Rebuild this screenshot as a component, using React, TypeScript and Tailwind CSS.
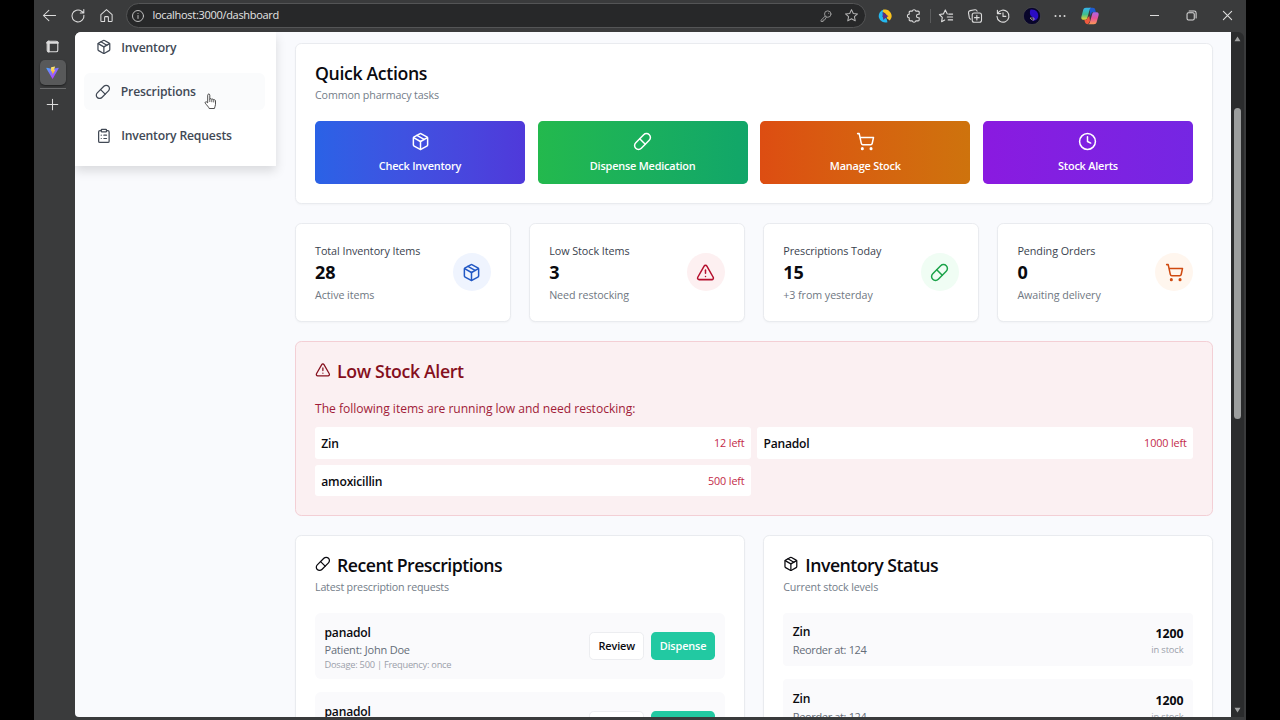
import type { ReactNode } from "react";
import { Clock, ClipboardList, Package, Pill, ShoppingCart, TriangleAlert } from "lucide-react";

const NAV = [
  { label: "Inventory", icon: Package, active: false },
  { label: "Prescriptions", icon: Pill, active: true },
  { label: "Inventory Requests", icon: ClipboardList, active: false },
];

const ACTIONS = [
  { label: "Check Inventory", icon: Package, bg: "from-[#2a62e6] to-[#4f39da]" },
  { label: "Dispense Medication", icon: Pill, bg: "from-[#23b94d] to-[#11a669]" },
  { label: "Manage Stock", icon: ShoppingCart, bg: "from-[#dd4d12] to-[#ce730d]" },
  { label: "Stock Alerts", icon: Clock, bg: "from-[#8a1ae0] to-[#7526e3]" },
];

const STATS = [
  { label: "Total Inventory Items", value: "28", note: "Active items", icon: Package, tone: "bg-[#eff4fe] text-[#2258c4]" },
  { label: "Low Stock Items", value: "3", note: "Need restocking", icon: TriangleAlert, tone: "bg-[#fdf0f1] text-[#b5102e]" },
  { label: "Prescriptions Today", value: "15", note: "+3 from yesterday", icon: Pill, tone: "bg-[#f0fdf4] text-[#1ca34a]" },
  { label: "Pending Orders", value: "0", note: "Awaiting delivery", icon: ShoppingCart, tone: "bg-[#fff6ee] text-[#cf4a10]" },
];

const LOW_STOCK = [
  { name: "Zin", left: "12 left" },
  { name: "Panadol", left: "1000 left" },
  { name: "amoxicillin", left: "500 left" },
];

function Stroke({ children, size = 16, className = "" }: { children: ReactNode; size?: number; className?: string }) {
  return (
    <svg
      width={size}
      height={size}
      viewBox="0 0 16 16"
      fill="none"
      stroke="currentColor"
      strokeWidth={1.1}
      strokeLinecap="round"
      strokeLinejoin="round"
      className={className}
    >
      {children}
    </svg>
  );
}

function Slot({ children }: { children: ReactNode }) {
  return <div className="flex h-8 w-[28.5px] shrink-0 items-center justify-center">{children}</div>;
}

function Toolbar() {
  return (
    <header className="flex h-[31px] shrink-0 items-center text-[#dcdcdc]">
      <div className="flex pl-[1.5px]">
        <Slot>
          <Stroke size={15}><path d="M14.5 8H1.8M7.3 2.5 1.5 8l5.8 5.5" /></Stroke>
        </Slot>
        <Slot>
          <Stroke><path d="M13.9 7.2A6 6 0 1 1 11.6 3.2L13.8 5M13.8 1.5V5h-3.5" /></Stroke>
        </Slot>
        <Slot>
          <Stroke size={15}><path d="M2 7 8 1.7 14 7v6.7a.8.8 0 0 1-.8.8H10V10a.8.8 0 0 0-.8-.8H6.8A.8.8 0 0 0 6 10v4.5H2.800a.8.8 0 0 1-.8-.8z" /></Stroke>
        </Slot>
      </div>
      <div className="ml-[4.5px] flex h-[25px] w-[740px] items-center rounded-full border border-[#545556] bg-[#272829] pr-[6px] pl-[4px]">
        <Stroke size={14} className="text-[#c4c4c4]">
          <circle cx="8" cy="8" r="6.3" />
          <path d="M8 7.4v3.4M8 5.1v.1" />
        </Stroke>
        <span className="ml-[8px] flex-1 text-[11px] tracking-[-0.3px] text-[#e4e4e4]">localhost:3000/dashboard</span>
        <Stroke size={14} className="text-[#9b9b9b]">
          <circle cx="10" cy="5.8" r="3.7" />
          <path d="M7.1 8.1 2.4 12.8v1.5h2.3v-1.6h1.6l2.2-3.4M11 4.8v.1" />
        </Stroke>
        <Stroke size={15} className="ml-[11px] text-[#b4b4b4]">
          <path d="m8 1.7 1.9 4.1 4.5.5-3.3 3 .9 4.4-4-2.2-4 2.2.9-4.4-3.3-3 4.5-.5z" />
        </Stroke>
      </div>
      <div className="flex items-center pl-[5.5px]">
        <Slot>
          <svg width="14" height="14" viewBox="0 0 14 14">
            <path d="M6 .5A6.600 6.600 0 1 0 9.500 13.200L8.500 9.500 4.500 8z" fill="#25b7ee" />
            <path d="M5.500.6a6.600 6.600 0 0 1 6.300 10.900L9 9.500 8 5 4.600 2.500z" fill="#fbc31d" />
            <path d="M4.400 3 10.500 7.300 8.200 8.300 5.300 11z" fill="#5a2f86" />
          </svg>
        </Slot>
        <Slot>
          <Stroke>
            <path d="M4.300 3.100h2a1.800 1.800 0 0 1 3.500 0h2.300a1.100 1.100 0 0 1 1.100 1.100v2h-.9a1.800 1.800 0 0 0 0 3.600h.9v2a1.100 1.100 0 0 1-1.100 1.100H9.800a1.800 1.800 0 0 1-3.500 0h-2a1.100 1.100 0 0 1-1.100-1.100v-2a1.800 1.800 0 0 1 0-3.600v-2a1.100 1.100 0 0 1 1.100-1.100z" />
          </Stroke>
        </Slot>
        <div className="mx-[1.5px] h-3.5 w-px bg-[#5a5b5c]" />
        <Slot>
          <Stroke><path d="M9.3 5.9 7.3 1.9 5.4 5.9l-4 .6L4.3 9.4l-.7 4.3 3.1-1.7M10.7 6.1h3.9M9.3 9h5.3M10.2 11.9h4.4" /></Stroke>
        </Slot>
        <Slot>
          <Stroke>
            <path d="M3.7 11.2a2 2 0 0 1-1.4-1.5L1.5 4.8a2 2 0 0 1 1.6-2.2l4.8-.8a2 2 0 0 1 2.2 1.4" />
            <rect x="5.2" y="5" width="9.3" height="9.3" rx="2" />
            <path d="M9.85 7.3v4.7M7.5 9.65h4.7" />
          </Stroke>
        </Slot>
        <Slot>
          <Stroke><path d="M2.4 2.2v3.4h3.4M2.6 5.5A6 6 0 1 1 2 8.4M8 4.8v3.6h2.8" /></Stroke>
        </Slot>
        <Slot>
          <svg width="18" height="18" viewBox="0 0 18 18">
            <circle cx="9" cy="9" r="8.6" fill="#08052a" stroke="#555" strokeWidth=".5" />
            <path d="M7.500 2.500c5-.8 8 2.500 7.800 6.500-.3 3.500-3.300 5-6 4.800 1.500-1 1.500-2.300.2-3.500C6.500 8.500 6.500 5 7.500 2.500z" fill="#2a0cc4" />
            <path d="M7 11h4v2H9z" fill="none" stroke="#c7b6a4" strokeWidth=".7" />
          </svg>
        </Slot>
        <Slot>
          <svg width="12" height="4" viewBox="0 0 12 4" fill="currentColor">
            <circle cx="1.5" cy="2" r="1" />
            <circle cx="6" cy="2" r="1" />
            <circle cx="10.5" cy="2" r="1" />
          </svg>
        </Slot>
        <div className="ml-[1.5px]">
          <Slot><Copilot /></Slot>
        </div>
      </div>
      <div className="ml-auto flex">
        <div className="flex w-[36.6px] items-center justify-center"><div className="h-px w-[9px] bg-[#dcdcdc]" /></div>
        <div className="flex w-[36.6px] items-center justify-center">
          <Stroke size={11}>
            <rect x="1.5" y="4" width="10.5" height="10.5" rx="2" strokeWidth="1.5" />
            <path d="M4.5 1.5H12a2.700 2.700 0 0 1 2.700 2.700v7.300" strokeWidth="1.5" />
          </Stroke>
        </div>
        <div className="flex w-[36.6px] items-center justify-center">
          <Stroke size={11}><path d="m2 2 12 12M14 2 2 14" strokeWidth="1.6" /></Stroke>
        </div>
      </div>
    </header>
  );
}

function Copilot() {
  return (
    <svg width="18" height="18" viewBox="0 0 18 18">
      <defs>
        <linearGradient id="cpA" x1="0" y1="0" x2="0" y2="1">
          <stop offset="0" stopColor="#35b4f0" />
          <stop offset=".55" stopColor="#3fbf8c" />
          <stop offset="1" stopColor="#f4d32e" />
        </linearGradient>
        <linearGradient id="cpB" x1="0" y1="0" x2="0" y2="1">
          <stop offset="0" stopColor="#a765ea" />
          <stop offset=".5" stopColor="#e8529a" />
          <stop offset="1" stopColor="#fb9a55" />
        </linearGradient>
      </defs>
      <path d="M8.500.8H12c1.300 0 1.900.7 2.200 1.800l.7 2.600h-2.700c-1 0-1.600.4-1.900 1.300L9.500 9z" fill="#1d5bd0" />
      <path d="M5 .8h5.200c-.9.3-1.300 1-1.600 2L6.300 11c-.4 1.200-1.100 1.800-2.300 1.800H2.200C.5 12.800 0 11.300.4 9.800L2.200 3C2.600 1.500 3.500.8 5 .8z" fill="url(#cpA)" />
      <path d="M3.300 12.800c1.700.2 2.700-.4 3.100-1.800L8.300 9l.7 5-2 3.200c-1.600 0-2.600-.7-3-2z" fill="#ee5a3e" />
      <path d="M13 5.200h2.800c1.700 0 2.200 1.500 1.800 3l-1.900 6.800c-.4 1.500-1.300 2.200-2.800 2.200H7c1-.2 1.600-.8 1.900-1.900l2.300-8.300c.3-1.200.8-1.800 1.800-1.800z" fill="url(#cpB)" />
    </svg>
  );
}

function TabRail() {
  return (
    <aside className="flex w-[41px] shrink-0 flex-col items-center pr-[4px] text-[#dcdcdc]">
      <Stroke size={13} className="mt-[8px]">
        <rect x="1.5" y="1.5" width="13" height="13" rx="2" strokeWidth="1.4" />
        <path d="M1.5 3.4h13" strokeWidth="2.6" />
        <path d="M3.3 2v12" strokeWidth="2.6" />
      </Stroke>
      <div className="mt-[7px] flex h-[25px] w-[26px] items-center justify-center rounded-[5px] bg-[#58595a] shadow-[0_1px_2px_rgba(0,0,0,0.5)]">
        <svg width="13" height="13" viewBox="0 0 32 32">
          <defs>
            <linearGradient id="vtA" x1="0" y1="0" x2=".7" y2="1">
              <stop offset="0" stopColor="#4aa8ff" />
              <stop offset="1" stopColor="#bd34fe" />
            </linearGradient>
            <linearGradient id="vtB" x1=".5" y1="0" x2=".5" y2="1">
              <stop offset="0" stopColor="#ffea83" />
              <stop offset="1" stopColor="#ffa800" />
            </linearGradient>
          </defs>
          <path d="M31 6 17 31c-.4.6-1.3.6-1.600 0L1 6c-.4-.7.2-1.500 1-1.400l14 2.500L30 4.600c.8-.1 1.400.7 1 1.400z" fill="url(#vtA)" />
          <path d="M22.500 1 12.600 2.900 12 13.500l3.300-.6-.9 4.500 2.200-.6L15.200 23l7.800-13.500-3.400.6z" fill="url(#vtB)" />
        </svg>
      </div>
      <div className="mt-[3px] h-px w-[26px] bg-[#6a6b6c]" />
      <Stroke size={13} className="mt-[9px]"><path d="M8 1.500v13M1.500 8h13" strokeWidth="1.3" /></Stroke>
    </aside>
  );
}

function Sidebar() {
  return (
    <aside className="h-[134px] w-[201px] shrink-0 bg-white px-[9px] shadow-[0_5px_10px_rgba(0,0,0,0.13)]">
      <nav className="-mt-[3.7px] flex flex-col gap-[6.3px] pr-[2px]">
        {NAV.map(({ label, icon: Icon, active }) => (
          <a
            key={label}
            className={`flex h-[37.9px] items-center rounded-md text-[12.2px] font-semibold tracking-[-0.18px] text-[#414955] ${
              active ? "gap-[10px] bg-[#fafbfc] pl-[11px]" : "gap-[9.5px] pl-[12px]"
            }`}
          >
            <Icon size={15.75} strokeWidth={1.9} />
            <span className="pt-[1px]">{label}</span>
          </a>
        ))}
      </nav>
    </aside>
  );
}

function Card({ children, className = "" }: { children: ReactNode; className?: string }) {
  return (
    <section className={`rounded-[6.3px] border border-[#e9ebef] bg-white px-[19px] shadow-[0_1px_2px_rgba(0,0,0,0.03)] ${className}`}>
      {children}
    </section>
  );
}

function QuickActions() {
  return (
    <Card className="h-[161px] pt-[18.5px]">
      <h2 className="text-[17.7px] leading-5 font-semibold tracking-[-0.35px]">Quick Actions</h2>
      <p className="mt-[4px] text-[10.7px] leading-4 tracking-[-0.13px] text-[#737d89]">Common pharmacy tasks</p>
      <div className="mt-[18.5px] grid grid-cols-4 gap-[12.6px]">
        {ACTIONS.map(({ label, icon: Icon, bg }) => (
          <button
            key={label}
            className={`flex h-[63px] flex-col items-center rounded-[4.7px] bg-linear-to-r pt-[10.5px] text-white ${bg}`}
          >
            <Icon size={19} strokeWidth={1.9} />
            <span className="mt-[7.5px] text-[10.9px] leading-4 font-semibold tracking-[-0.2px]">{label}</span>
          </button>
        ))}
      </div>
    </Card>
  );
}

function Stats() {
  return (
    <div className="grid grid-cols-4 gap-[18.5px]">
      {STATS.map(({ label, value, note, icon: Icon, tone }) => (
        <Card key={label} className="flex h-[99px] items-center justify-between">
          <div>
            <p className="text-[10.8px] leading-4 font-medium tracking-[-0.06px] text-[#3a424e]">{label}</p>
            <p className="pt-px text-[18px] leading-[25px] font-bold">{value}</p>
            <p className="mt-[2px] text-[10.7px] leading-4 tracking-[-0.06px] text-[#6f7782]">{note}</p>
          </div>
          <div className={`mb-px flex size-[37.8px] items-center justify-center rounded-full ${tone}`}>
            <Icon size={19} strokeWidth={1.9} />
          </div>
        </Card>
      ))}
    </div>
  );
}

function LowStockAlert() {
  return (
    <section className="h-[175px] rounded-[6.3px] border border-[#f3cfd5] bg-[#fbf0f2] px-[19px] pt-[18.5px]">
      <h2 className="flex items-center gap-[6.3px] text-[17.7px] leading-5 font-semibold tracking-[-0.35px] text-[#850f1d]">
        <TriangleAlert size={15.75} strokeWidth={1.9} className="mb-[2px]" />
        Low Stock Alert
      </h2>
      <p className="mt-[19px] text-[12.1px] leading-[18px] tracking-[-0.03px] text-[#a11c38]">
        The following items are running low and need restocking:
      </p>
      <div className="mt-[9.5px] grid grid-cols-2 gap-[6.3px]">
        {LOW_STOCK.map((item) => (
          <div key={item.name} className="flex h-[31.5px] items-center justify-between rounded-[3px] bg-white px-[6.3px]">
            <span className="pt-[2px] text-[12.1px] font-semibold tracking-[-0.2px]">{item.name}</span>
            <span className="text-[10.8px] tracking-[-0.13px] text-[#c32a48]">{item.left}</span>
          </div>
        ))}
      </div>
    </section>
  );
}

function RecentPrescriptions() {
  return (
    <Card className="h-[240px] pt-[18.5px]">
      <h2 className="flex items-center gap-[6.3px] text-[17.7px] leading-5 font-semibold tracking-[-0.52px]">
        <Pill size={15.75} strokeWidth={1.9} className="mb-[2px]" />
        Recent Prescriptions
      </h2>
      <p className="mt-[4px] text-[10.7px] leading-4 tracking-[-0.2px] text-[#737d89]">Latest prescription requests</p>
      <div className="mt-[18.3px] space-y-[13px]">
        {[0, 1].map((i) => (
          <div key={i} className="flex h-[66px] items-center justify-between rounded-[6px] bg-[#fafafc] px-[9.5px]">
            <div className="pt-[2px]">
              <p className="text-[12.1px] leading-[18px] font-semibold tracking-[-0.2px]">panadol</p>
              <p className="text-[11px] leading-4 tracking-[-0.2px] text-[#656d78]">Patient: John Doe</p>
              <p className="text-[9.3px] leading-[13px] tracking-[-0.25px] text-[#9aa0aa]">Dosage: 500 | Frequency: once</p>
            </div>
            <div className="flex gap-[6.3px] text-[10.9px] font-semibold tracking-[-0.15px]">
              <button className="h-[28.5px] w-[55.5px] rounded-[4.7px] border border-[#ecedf0] bg-white">Review</button>
              <button className="h-[28.5px] w-[64.5px] rounded-[4.7px] bg-[#22c9a2] text-white">Dispense</button>
            </div>
          </div>
        ))}
      </div>
    </Card>
  );
}

function InventoryStatus() {
  return (
    <Card className="h-[240px] pt-[18.5px]">
      <h2 className="flex items-center gap-[6.3px] text-[17.7px] leading-5 font-semibold tracking-[-0.5px]">
        <Package size={15.75} strokeWidth={1.9} className="mb-[2px]" />
        Inventory Status
      </h2>
      <p className="mt-[4px] text-[10.7px] leading-4 tracking-[-0.15px] text-[#737d89]">Current stock levels</p>
      <div className="mt-[18.3px] space-y-[13px]">
        {[0, 1].map((i) => (
          <div key={i} className="flex h-[53.3px] items-center justify-between rounded-[4px] bg-[#fafafc] px-[9.5px]">
            <div className="pt-[2.2px]">
              <p className="text-[12.1px] leading-[18px] font-semibold tracking-[-0.2px]">Zin</p>
              <p className="text-[11px] leading-[17px] tracking-[-0.35px] text-[#656d78]">Reorder at: 124</p>
            </div>
            <div className="pt-[2.2px] text-right">
              <p className="text-[12.3px] leading-[18px] font-bold">1200</p>
              <p className="text-[9.3px] leading-[13px] tracking-[-0.1px] text-[#9aa0aa]">in stock</p>
            </div>
          </div>
        ))}
      </div>
    </Card>
  );
}

function Scrollbar() {
  return (
    <div className="flex w-[13px] shrink-0 flex-col items-center rounded-tr-md bg-[#2b2c2d]">
      <svg width="7" height="6" viewBox="0 0 7 6" className="mt-[4px]"><path d="M3.5.5 6.5 5.200h-6z" fill="#a0a1a1" /></svg>
      <div className="mt-[66px] h-[311px] w-[7px] rounded-full bg-[#9c9e9e]" />
      <svg width="7" height="6" viewBox="0 0 7 6" className="mt-auto mb-[4px]"><path d="M3.5 5.500.5.800h6z" fill="#a0a1a1" /></svg>
    </div>
  );
}

function HandCursor() {
  return (
    <svg width="13" height="17" viewBox="0 0 13 17" className="absolute top-[93px] left-[204px]">
      <path
        d="M3.700 9.800V2.200c0-1.600 2.100-1.600 2.100 0v4c.3-.8 1.800-.7 2 .3.500-.7 1.700-.5 1.900.5.700-.6 1.800-.1 1.800.9v3.400c0 1.900-.9 2.600-1.100 4.200H5.200c-.3-1.300-2.600-3.400-3.900-5.300-.7-1.300.8-1.800 1.500-1.100z"
        fill="#fff"
        stroke="#222"
        strokeWidth=".8"
      />
      <path d="M5.800 6v3M7.800 6.700v2.500M9.700 7.200v2.200" stroke="#222" strokeWidth=".7" />
    </svg>
  );
}

export default function App() {
  return (
    <div className="relative flex h-[720px] w-[1280px] justify-center overflow-hidden bg-black font-['Open_Sans','Noto_Sans',sans-serif] text-[#0a0a0f]">
      <div className="flex w-[1212px] flex-col bg-[#3a3b3c]">
        <Toolbar />
        <div className="flex h-[685.5px] pt-[1px]">
          <TabRail />
          <main className="flex flex-1 items-start overflow-hidden rounded-tl-[6px] rounded-bl-[4px] bg-[#f9fafd]">
            <Sidebar />
            <div className="flex flex-1 flex-col gap-[19.1px] pt-[11px] pr-[18px] pl-[19px]">
              <QuickActions />
              <Stats />
              <LowStockAlert />
              <div className="grid grid-cols-2 gap-[18.5px]">
                <RecentPrescriptions />
                <InventoryStatus />
              </div>
            </div>
          </main>
          <Scrollbar />
          <div className="w-[2px] shrink-0" />
        </div>
      </div>
      <HandCursor />
    </div>
  );
}
